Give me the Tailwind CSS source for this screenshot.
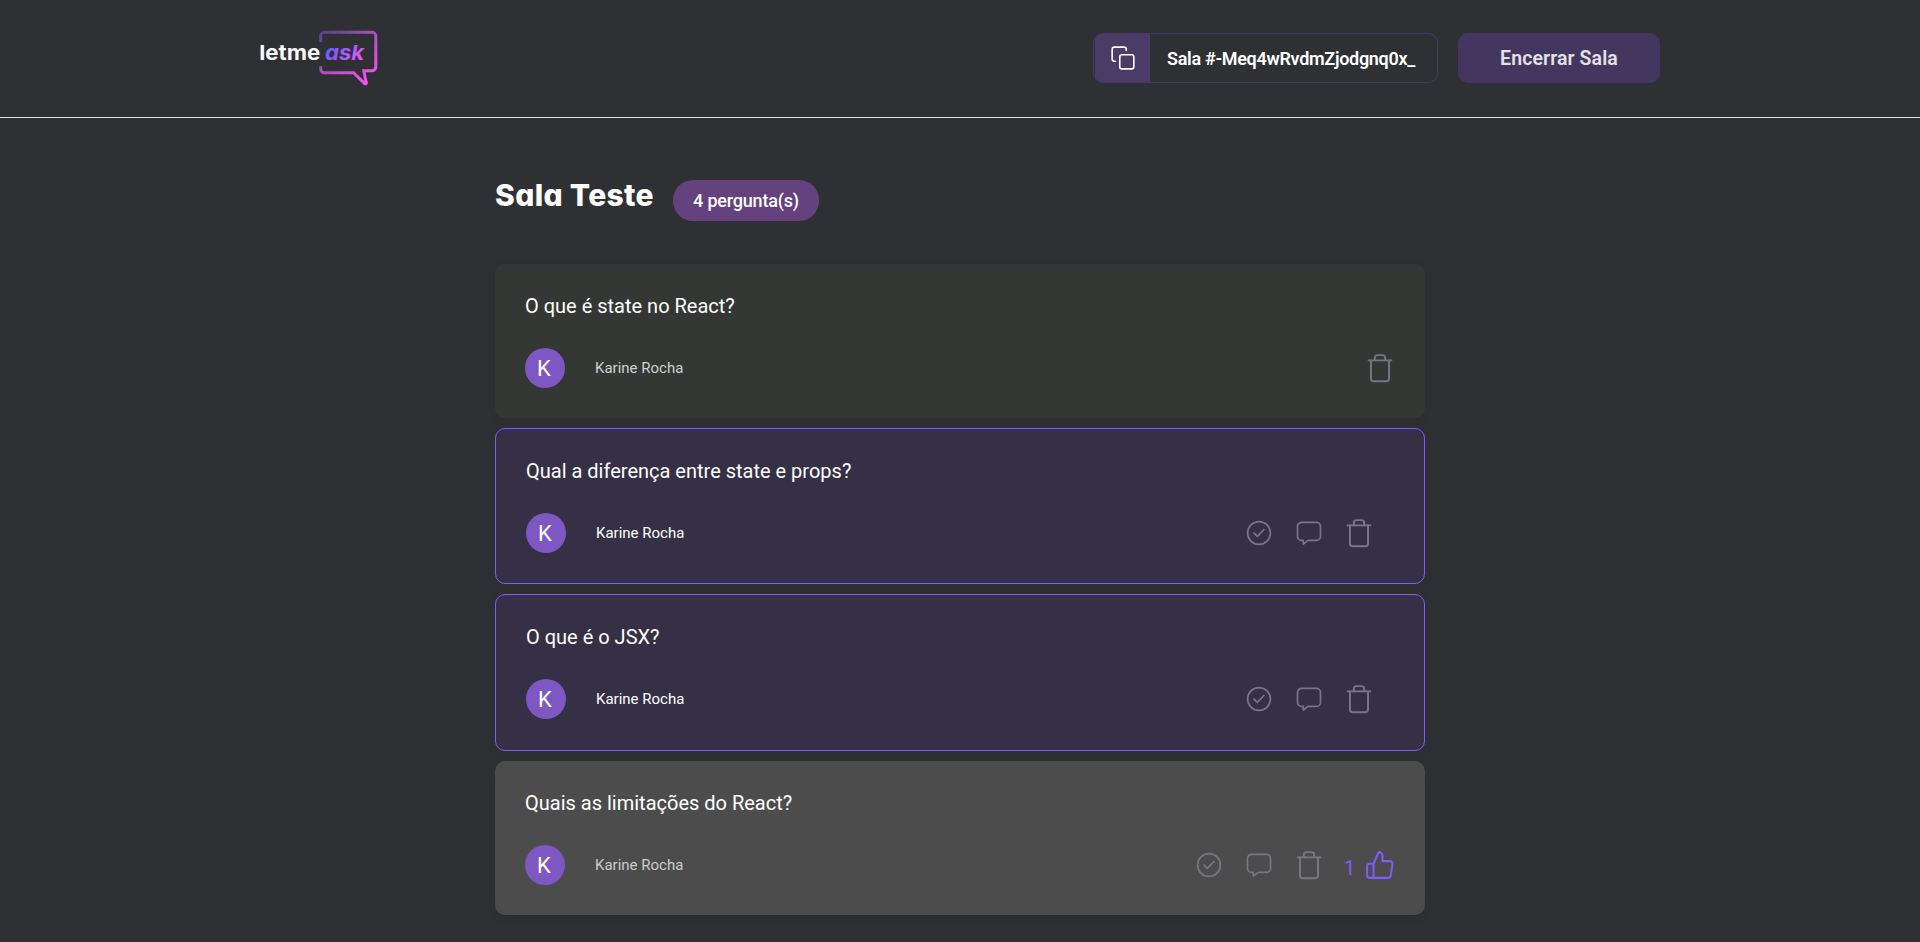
<!DOCTYPE html>
<html lang="pt-BR">
<head>
<meta charset="utf-8">
<title>Letmeask - Sala Teste</title>
<script src="https://cdn.jsdelivr.net/npm/@tailwindcss/browser@4"></script>
</head>
<body class="h-[942px] overflow-hidden bg-[#2f3034] font-['Roboto',sans-serif] text-white">
<svg class="hidden">
  <defs>
    <symbol id="trash" viewBox="-.4 -.4 24.8 24.8" fill="none" stroke="currentColor" stroke-width="1.5" stroke-linecap="round" stroke-linejoin="round">
      <path d="M3.2 6.1H20.8"/>
      <path d="M8 6V4A2 2 0 0 1 10 2H14A2 2 0 0 1 16 4V6M19 6V20.2A2 2 0 0 1 17 22.2H7A2 2 0 0 1 5 20.2V6"/>
    </symbol>
    <symbol id="check" viewBox="-.5 -.5 26 26" fill="none" stroke="currentColor" stroke-width="1.7" stroke-linecap="round" stroke-linejoin="round">
      <circle cx="12.5" cy="12.5" r="11.4"/>
      <path d="M7.5 12.7L10.8 15.9L17.5 9"/>
    </symbol>
    <symbol id="answer" viewBox="-.5 -.5 26 26" fill="none" stroke="currentColor" stroke-width="1.7" stroke-linecap="round" stroke-linejoin="round">
      <path d="M5 1.9H20A4 4 0 0 1 24 5.9V15.9A4 4 0 0 1 20 19.9H11.6L6.8 23.6V19.9H5A4 4 0 0 1 1 15.9V5.9A4 4 0 0 1 5 1.9Z"/>
    </symbol>
    <symbol id="like" viewBox="-.4 -.4 24.8 24.8" fill="none" stroke="currentColor" stroke-width="1.6" stroke-linecap="round" stroke-linejoin="round">
      <path d="M7 22H4A2 2 0 0 1 2 20V13A2 2 0 0 1 4 11H7M14 9V5A3 3 0 0 0 11 2L7 11V22H18.28A2 2 0 0 0 20.28 20.3L21.66 11.3A2 2 0 0 0 19.66 9Z"/>
    </symbol>
  </defs>
</svg>

<header class="h-[118px] border-b border-[#e2e2e2]">
  <div class="mx-auto flex h-[117px] w-[1400px] items-start justify-between">
    <svg class="mt-[27px] h-[62px] w-[124px] overflow-visible" viewBox="0 0 124 62">
      <defs>
        <linearGradient id="bubble" gradientUnits="userSpaceOnUse" x1="62" y1="2" x2="104" y2="56">
          <stop offset="0" stop-color="#51437c"/>
          <stop offset=".45" stop-color="#a24fb4"/>
          <stop offset="1" stop-color="#f254f0"/>
        </linearGradient>
        <linearGradient id="ask" gradientUnits="userSpaceOnUse" x1="74" y1="18" x2="96" y2="38">
          <stop offset="0" stop-color="#6f5cff"/>
          <stop offset="1" stop-color="#e559f9"/>
        </linearGradient>
      </defs>
      <path d="M60.7 14.9V9A3.7 3.7 0 0 1 64.4 5.3H112.3A3.7 3.7 0 0 1 115.8 9V40A3.7 3.7 0 0 1 112.3 43.7H103.8L106 54.8A1 1 0 0 1 104.7 56.6L93.6 45.7H64.4A3.7 3.7 0 0 1 60.7 42V39.3" fill="none" stroke="url(#bubble)" stroke-width="3"/>
      <text x="-.7" y="33" textLength="61" lengthAdjust="spacingAndGlyphs" font-family="Inter, sans-serif" font-size="20.5" font-weight="700" fill="#f8f8f8">letme</text>
      <text x="65" y="33" textLength="39" lengthAdjust="spacingAndGlyphs" font-family="Inter, sans-serif" font-size="20.5" font-weight="700" font-style="italic" fill="url(#ask)" class="[font-feature-settings:'cv11']">ask</text>
    </svg>

    <div class="mt-[33px] flex gap-5">
      <button class="flex h-[50px] w-[345px] overflow-hidden rounded-[10px] border border-[#483a66]">
        <span class="ml-px flex h-full w-[55px] items-center justify-center bg-[#4a3b67]">
          <svg class="h-[26px] w-[26px]" viewBox="0 0 24 24" fill="none" stroke="#fff" stroke-width="1.5" stroke-linecap="round" stroke-linejoin="round">
            <path d="M20 9H11A2 2 0 0 0 9 11V20A2 2 0 0 0 11 22H20A2 2 0 0 0 22 20V11A2 2 0 0 0 20 9Z"/>
            <path d="M5 15H4A2 2 0 0 1 2 13V4A2 2 0 0 1 4 2H13A2 2 0 0 1 15 4V5"/>
          </svg>
        </span>
        <span class="pl-[17px] text-[18px] leading-[50px] font-semibold tracking-[-0.3px] whitespace-nowrap">Sala #-Meq4wRvdmZjodgnq0x_</span>
      </button>
      <button class="h-[50px] w-[202px] rounded-[10px] bg-[#43375f] pt-0.5 text-[19.5px] font-semibold tracking-[0.1px] text-[#e3e1e7]">Encerrar Sala</button>
    </div>
  </div>
</header>

<main class="mx-auto w-[930px] pt-[62px]">
  <div class="flex h-[84px] items-start">
    <h1 class="w-[178px] pt-[2px] font-['Inter',sans-serif] text-[30px] leading-[27px] font-extrabold tracking-[0.35px] whitespace-nowrap [font-feature-settings:'cv11']">Sala Teste</h1>
    <span class="flex h-[41px] w-[146px] items-center justify-center rounded-[20px] bg-[#65417e] text-[18px] font-medium tracking-[-0.2px]">4 pergunta(s)</span>
  </div>

  <div class="flex flex-col gap-[10px]">
    <article class="rounded-[10px] bg-[#353735] p-[30px] shadow-[0_2px_12px_rgba(0,0,0,0.06)]">
      <p class="text-[20px] leading-6">O que é state no React?</p>
      <footer class="mt-[30px] flex h-10 items-center">
        <div class="flex h-10 w-10 items-center justify-center rounded-full bg-[#7e57c2] pr-0.5 text-[22px] text-white">K</div>
        <span class="ml-[30px] text-[15px] text-[#d0d0d2]">Karine Rocha</span>
        <svg class="-mr-px ml-auto h-8 w-8 text-[#777784]"><use href="#trash"/></svg>
      </footer>
    </article>

    <article class="rounded-[10px] border border-[#835afd] bg-[#363047] p-[30px] shadow-[0_2px_12px_rgba(0,0,0,0.06)]">
      <p class="text-[20px] leading-6">Qual a diferença entre state e props?</p>
      <footer class="mt-[30px] flex h-10 items-center">
        <div class="flex h-10 w-10 items-center justify-center rounded-full bg-[#7e57c2] pr-0.5 text-[22px] text-white">K</div>
        <span class="ml-[30px] text-[15px]">Karine Rocha</span>
        <div class="mr-[19px] ml-auto flex items-center text-[#777784]">
          <svg class="mr-6 h-[26px] w-[26px]"><use href="#check"/></svg>
          <svg class="mr-[21px] h-[26px] w-[26px]"><use href="#answer"/></svg>
          <svg class="h-8 w-8"><use href="#trash"/></svg>
        </div>
      </footer>
    </article>

    <article class="rounded-[10px] border border-[#835afd] bg-[#363047] p-[30px] pb-[31px] shadow-[0_2px_12px_rgba(0,0,0,0.06)]">
      <p class="text-[20px] leading-6">O que é o JSX?</p>
      <footer class="mt-[30px] flex h-10 items-center">
        <div class="flex h-10 w-10 items-center justify-center rounded-full bg-[#7e57c2] pr-0.5 text-[22px] text-white">K</div>
        <span class="ml-[30px] text-[15px]">Karine Rocha</span>
        <div class="mr-[19px] ml-auto flex items-center text-[#777784]">
          <svg class="mr-6 h-[26px] w-[26px]"><use href="#check"/></svg>
          <svg class="mr-[21px] h-[26px] w-[26px]"><use href="#answer"/></svg>
          <svg class="h-8 w-8"><use href="#trash"/></svg>
        </div>
      </footer>
    </article>

    <article class="rounded-[10px] bg-[#4c4c4c] p-[30px] shadow-[0_2px_12px_rgba(0,0,0,0.06)]">
      <p class="text-[20px] leading-6">Quais as limitações do React?</p>
      <footer class="mt-[30px] flex h-10 items-center">
        <div class="flex h-10 w-10 items-center justify-center rounded-full bg-[#7e57c2] pr-0.5 text-[22px] text-white">K</div>
        <span class="ml-[30px] text-[15px] text-[#cbcbcd]">Karine Rocha</span>
        <div class="-mr-px ml-auto flex items-center text-[#777784]">
          <svg class="mr-6 h-[26px] w-[26px]"><use href="#check"/></svg>
          <svg class="mr-[21px] h-[26px] w-[26px]"><use href="#answer"/></svg>
          <svg class="h-8 w-8"><use href="#trash"/></svg>
          <span class="ml-[19px] w-5 pt-[6px] text-[20px] leading-6 text-[#835afd]">1</span>
          <svg class="h-8 w-8 text-[#835afd]"><use href="#like"/></svg>
        </div>
      </footer>
    </article>
  </div>
</main>
</body>
</html>
